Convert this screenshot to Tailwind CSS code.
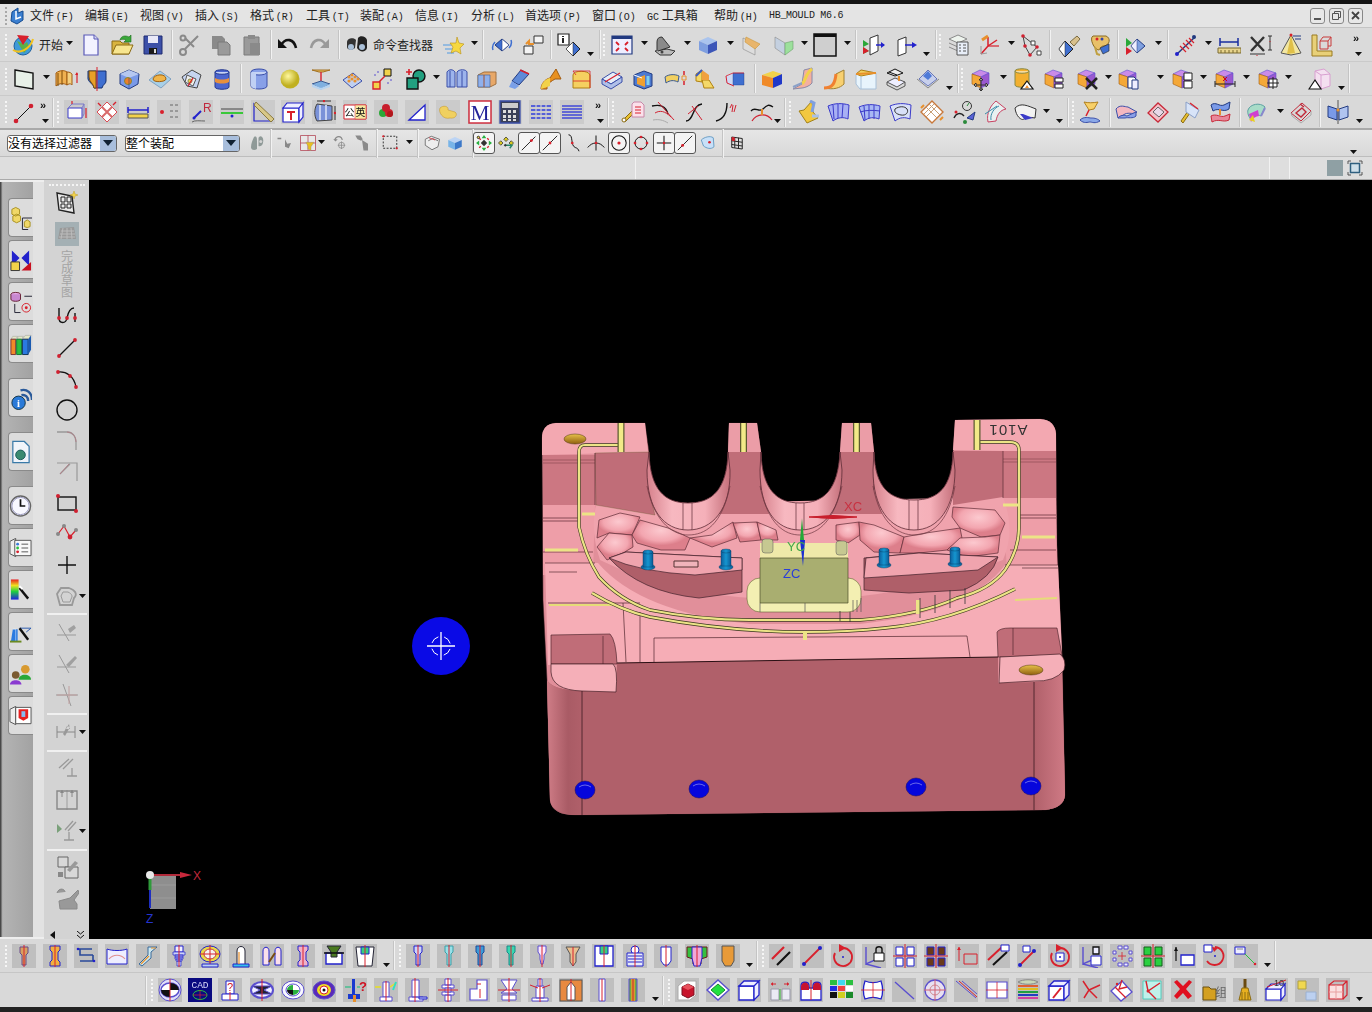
<!DOCTYPE html>
<html>
<head>
<title>NX HB_MOULD</title>
<script src="https://cdn.jsdelivr.net/npm/@tailwindcss/browser@4"></script>
</head>
<body class="w-[1372px] h-[1012px] overflow-hidden bg-[#222] font-['Liberation_Sans','Noto_Sans_CJK_SC',sans-serif] text-black">
<div class="h-1 bg-[#141414]"></div>

<!-- menu bar -->
<div class="flex items-center h-6 bg-[#e4e4e4] border-b border-[#c4c4c4] text-[12px] font-['Noto_Sans_CJK_SC',sans-serif] text-[#222]">
	<div class="ml-[5px] h-[18px] border-l-2 border-dotted border-[#a8a8a8]"></div>
	<svg class="ml-[2px] w-[16px] h-[18px] blur-[0.3px]" viewBox="0 0 16 18"><path d="M3 5l6-4v5l5-2v9l-6 4-6-3z" fill="#3b7fd0" stroke="#134a8f"/><path d="M7 4v8l5-2" fill="none" stroke="#fff" stroke-width="1.5"/></svg>
	<div class="ml-[5px] flex items-center">
		<span class="w-[55px]">文件 <span class="font-['Liberation_Mono'] text-[10px] -ml-[1px]">(F)</span></span>
		<span class="w-[55px]">编辑 <span class="font-['Liberation_Mono'] text-[10px] -ml-[1px]">(E)</span></span>
		<span class="w-[55px]">视图 <span class="font-['Liberation_Mono'] text-[10px] -ml-[1px]">(V)</span></span>
		<span class="w-[55px]">插入 <span class="font-['Liberation_Mono'] text-[10px] -ml-[1px]">(S)</span></span>
		<span class="w-[56px]">格式 <span class="font-['Liberation_Mono'] text-[10px] -ml-[1px]">(R)</span></span>
		<span class="w-[54px]">工具 <span class="font-['Liberation_Mono'] text-[10px] -ml-[1px]">(T)</span></span>
		<span class="w-[55px]">装配 <span class="font-['Liberation_Mono'] text-[10px] -ml-[1px]">(A)</span></span>
		<span class="w-[56px]">信息 <span class="font-['Liberation_Mono'] text-[10px] -ml-[1px]">(I)</span></span>
		<span class="w-[54px]">分析 <span class="font-['Liberation_Mono'] text-[10px] -ml-[1px]">(L)</span></span>
		<span class="w-[67px]">首选项 <span class="font-['Liberation_Mono'] text-[10px] -ml-[1px]">(P)</span></span>
		<span class="w-[55px]">窗口 <span class="font-['Liberation_Mono'] text-[10px] -ml-[1px]">(O)</span></span>
		<span class="w-[67px]"><span class="font-['Liberation_Mono'] text-[10px]">GC</span> 工具箱</span>
		<span class="w-[55px]">帮助 <span class="font-['Liberation_Mono'] text-[10px] -ml-[1px]">(H)</span></span>
		<span class="font-['Liberation_Mono'] text-[10px] tracking-[-0.3px] leading-[18px]">HB_MOULD M6.6</span>
	</div>
	<div class="ml-auto mr-[9px] flex gap-[4px]">
		<span class="w-[15px] h-[16px] rounded-[3px] border border-[#888] bg-[#e8e8e8] flex items-end justify-center pb-[3px]"><span class="w-[7px] h-[2px] bg-[#555]"></span></span>
		<span class="w-[15px] h-[16px] rounded-[3px] border border-[#888] bg-[#e8e8e8] flex items-center justify-center"><svg class="w-[9px] h-[9px]" viewBox="0 0 9 9"><path d="M2.500 2V.5h6v6H7M.5 2.500h6v6h-6z" fill="none" stroke="#555"/></svg></span>
		<span class="w-[15px] h-[16px] rounded-[3px] border border-[#888] bg-[#e8e8e8] flex items-center justify-center"><svg class="w-[9px] h-[9px]" viewBox="0 0 9 9"><path d="M1 1l7 7M8 1L1 8" stroke="#444" stroke-width="1.800"/></svg></span>
	</div>
</div>

<!-- toolbars -->
<div id="r1" class="flex items-center h-[34px] bg-[#dadada] border-b border-[#cacaca]"></div>
<div id="r2" class="flex items-center h-[34px] bg-[#d9d9d9] border-b border-[#cacaca]"></div>
<div id="r3" class="flex items-center h-[34px] bg-[#d9d9d9] border-b-2 border-[#a9a9a9]"></div>
<div id="r4" class="flex items-center h-[27px] bg-gradient-to-b from-[#e6e6e6] to-[#d9d9d9] border-b border-[#bdbdbd] text-[12px]"></div>
<div class="flex items-center h-[23px] bg-[#dedede] border-b border-[#aaa]">
	<div class="ml-[635px] w-px h-full bg-[#f2f2f2]"></div>
	<div class="ml-[633px] w-px h-full bg-[#f2f2f2]"></div>
	<div class="ml-[19px] w-px h-full bg-[#f2f2f2]"></div>
	<div class="ml-[37px] w-4 h-4 bg-[#8fa0a4]"></div>
	<svg class="ml-[4px] w-4 h-4" viewBox="0 0 16 16"><path d="M1 4V1h3M12 1h3v3M15 12v3h-3M4 15H1v-3" fill="none" stroke="#555"/><rect x="3.500" y="3.500" width="9" height="9" fill="#cfe0ea" stroke="#2f5f7f" stroke-width="1.500"/></svg>
</div>

<!-- middle: docks and graphics area -->
<div class="flex h-[759px]">
	<div class="w-[33px] border-y-2 border-[#eee] bg-gradient-to-r from-[#333] via-[#b4b4b4] via-[8%] to-[#a2a2a2]" >
		<div id="dock" class="pt-[15px] pl-[8px] flex flex-col"></div>
	</div>
	<div class="w-[11px] border-y-2 border-[#eee] bg-[#e2e2e2]"></div>
	<div id="tools" class="w-[45px] bg-[#d3d3d3] flex flex-col items-center"></div>

	<div class="relative flex-1 bg-black overflow-hidden">
		<!-- WCS handle -->
		<div class="absolute left-[323px] top-[437px] w-[58px] h-[58px] rounded-full bg-[#0a0ae6] flex items-center justify-center blur-[0.4px]">
			<svg class="w-[28px] h-[28px]" viewBox="0 0 28 28"><path d="M14 0v28M0 14h28" stroke="#fff" stroke-width="1.300"/><circle cx="14" cy="14" r="9.500" fill="none" stroke="#fff" stroke-dasharray="9 5.900" stroke-dashoffset="-3"/></svg>
		</div>

		<!-- absolute csys -->
		<svg class="absolute left-[50px] top-[680px] w-[120px] h-[70px]" viewBox="139 860 120 70">
			<rect x="150" y="876" width="26" height="33" fill="#8e8e8e"/>
			<path d="M150 885h26M150 898h26" stroke="#9c9c9c"/>
			<path d="M150 875h34" stroke="#b02a3a" stroke-width="2"/><path d="M180 872l12 3-12 3z" fill="#c8283c"/>
			<path d="M150 875v15" stroke="#2f9a3a" stroke-width="3"/><path d="M150 890v18" stroke="#1e2ec0" stroke-width="2"/>
			<circle cx="150" cy="875" r="4" fill="#e8e8e8"/>
			<text x="193" y="880" font-size="12" fill="#c0283c">X</text>
			<text x="146" y="923" font-size="12" fill="#2434d0">Z</text>
		</svg>

		<!-- mould part -->
		<svg class="absolute left-[441px] top-[230px] w-[640px] h-[415px] blur-[0.3px]" viewBox="530 410 640 415">
			<defs>
				<linearGradient id="u" x1="0" y1="0" x2="1" y2="0"><stop offset="0" stop-color="#d6808b"/><stop offset=".3" stop-color="#f7b8c0"/><stop offset=".7" stop-color="#f5b0b9"/><stop offset="1" stop-color="#c46f7a"/></linearGradient>
				<radialGradient id="c" cy=".35"><stop offset="0" stop-color="#fcc9cf"/><stop offset=".7" stop-color="#f3a6b0"/><stop offset="1" stop-color="#dd7f8b"/></radialGradient>
				<linearGradient id="w" x1="0" y1="0" x2="1" y2="0"><stop offset="0" stop-color="#cf7d87"/><stop offset=".6" stop-color="#a95b65"/><stop offset="1" stop-color="#b0606a"/></linearGradient>
				<linearGradient id="w2" x1="0" y1="0" x2="1" y2="0"><stop offset="0" stop-color="#b0606a"/><stop offset="1" stop-color="#cf7a85"/></linearGradient>
				<linearGradient id="g" x1="0" y1="0" x2="0" y2="1"><stop offset="0" stop-color="#e8c24a"/><stop offset="1" stop-color="#8f5f10"/></linearGradient>
				<linearGradient id="b" x1="0" y1="0" x2="1" y2="0"><stop offset="0" stop-color="#0d5f9c"/><stop offset=".5" stop-color="#1596d0"/><stop offset="1" stop-color="#0b5c97"/></linearGradient>
			</defs>
			<!-- silhouette with three U cut-outs -->
			<path d="M542 438Q542 424 556 423L645 423L649 452C650 490 665 503 688 503C712 503 727 490 728 452L729 423L757 423L761 452C762 490 777 503 800 503C824 503 838 490 840 452L842 423L871 423L874 452C875 488 890 500 914 500C938 500 952 488 953 452L955 420L1040 419Q1055 420 1056 434L1057 545L1062 650L1065 795Q1064 808 1045 810L575 815Q552 815 550 800L547 680L543 600Z" fill="#e18f9a" stroke="#3a1a20" stroke-width=".5"/>
			<!-- tab tops -->
			<path d="M542 438Q542 424 556 423L645 423L648 452L542 455Z" fill="#f3a8b1"/>
			<path d="M729 423h28l4 29h-33z" fill="#eb9da7"/><path d="M842 423h29l3 29h-34z" fill="#eb9da7"/>
			<path d="M955 420L1040 419Q1055 420 1056 434V452L953 450Z" fill="#f3a8b1"/>
			<!-- side shelves -->
			<path d="M543 455h52v50h-52z" fill="#cc7782"/><path d="M1003 451h53v47h-53z" fill="#cc7782"/>
			<path d="M543 460h52M543 463h52M1003 459h53M1003 462h53" stroke="#8d4a55" stroke-width=".7"/>
			<path d="M543 505h52l-2 70h-50z" fill="#ee9ea8"/><path d="M1003 498h53l1 75h-50z" fill="#ee9ea8"/>
			<path d="M543 518h36M543 521h36M543 552h50M1018 515h38M1018 518h38M1010 550h46" stroke="#6c3640" stroke-width=".8"/>
			<!-- cell field -->
			<path d="M596 505L1003 497Q1016 530 1003 560Q900 600 800 600Q680 600 600 560Q590 530 596 505Z" fill="#f0a3ad"/>
			<!-- tab faces -->
			<path d="M595 453L649 452L650 495L655 515L596 505Z" fill="#c06d78" stroke="#552" stroke-width=".3"/>
			<path d="M728 452h33v38l8 24h-50l9-24z" fill="#c06d78"/>
			<path d="M840 452h34v38l8 24h-50l8-24z" fill="#c06d78"/>
			<path d="M953 451h50v46l-50 8z" fill="#c06d78"/>
			<path d="M595 453v52M1003 451v47M728 452v38M761 452v38M840 452v38M874 452v38" stroke="#5a2b33" stroke-width=".7"/>
			<g fill="url(#c)" stroke="#5e2c36" stroke-width=".7">
				<path d="M599 520L620 513L640 517L632 535L609 533L597 538Z"/>
				<path d="M640 520L647 522L668 528L690 538L685 550L661 550L637 543L632 535Z"/>
				<path d="M609 533L632 535L633 547L623 553L607 560L597 547Z"/>
				<path d="M690 538L712 535L733 522L737 538L712 547Z"/>
				<path d="M733 523L757 522L761 540L740 542Z"/>
				<path d="M757 522L776 530L778 540L761 540Z"/>
				<path d="M836 525L859 522L860 535L848 543L836 540Z"/>
				<path d="M859 522L874 525L904 537L900 553L874 552L860 540Z"/>
				<path d="M904 537L926 533L960 528L962 538L947 550L919 553L900 553Z"/>
				<path d="M953 507L995 510L1005 523L1000 535L981 537L960 528L952 517Z"/>
				<path d="M960 538L985 537L1000 535L998 553L967 557L947 550Z"/>
			</g>
			<!-- U rims -->
			<g fill="url(#u)" stroke="#5e2c36" stroke-width=".8">
				<path d="M649 452C650 490 665 503 688 503C712 503 727 490 728 452L730 470C731 510 712 530 688 530C664 530 647 510 647 470Z"/>
				<path d="M761 452C762 490 777 503 800 503C824 503 838 490 840 452L842 470C842 510 824 530 800 530C776 530 760 510 760 470Z"/>
				<path d="M874 452C875 488 890 500 914 500C938 500 952 488 953 452L955 470C955 508 938 530 914 530C890 530 873 508 873 470Z"/>
			</g>
			<path d="M647 486C655 525 675 535 688 535C705 535 722 525 730 486M760 486C768 525 785 535 800 535C815 535 833 525 842 486M873 486C880 525 900 535 914 535C930 535 948 525 955 486" stroke="#6e3640" stroke-width=".7" fill="none"/>
			<path d="M683 503v27M692 503v27M796 503v27M804 503v27M909 500v30M918 500v30" stroke="#5e2c36" stroke-width=".7"/>
			<!-- lower plate -->
			<path d="M545 563H598Q640 612 750 624H860Q970 612 1005 565H1058L1062 655L998 657L617 663L548 665Z" fill="#f6adb6"/>
			<path d="M545 563h50M1005 565h53M549 572h28M1022 568h36" stroke="#3f1d24" stroke-width=".6"/>
			<path d="M654 638L967 636M654 638V662M967 636L970 657M640 612V662M623 603L626 662M548 603H640" stroke="#51262e" stroke-width=".7" fill="none"/>
			<path d="M549 605L613 605M1015 600L1057 598" stroke="#e6dc78" stroke-width="2"/>
			<!-- corner pockets -->
			<path d="M551 635L610 634Q616 640 617 664H551Z" fill="#c06d78" stroke="#401d24" stroke-width=".6"/>
			<path d="M603 636V664" stroke="#401d24" stroke-width=".6"/>
			<path d="M997 632Q1000 628 1010 628L1057 628L1062 655L998 657Z" fill="#c06d78" stroke="#401d24" stroke-width=".6"/>
			<path d="M1013 628V655" stroke="#401d24" stroke-width=".6"/>
			<!-- plates -->
			<path d="M609 558L626 552L742 558V592L699 598Q640 592 609 558Z" fill="#af5f69" stroke="#40202a" stroke-width=".7"/>
			<path d="M609 558L626 552L742 558V570L695 575Q640 572 609 558Z" fill="#f0a4ae" stroke="#40202a" stroke-width=".7"/>
			<path d="M674 561h24v6h-24z" fill="#f0b3ba" stroke="#533"/>
			<path d="M864 558L919 553L998 557Q992 578 964 590L909 593L864 590Z" fill="#af5f69" stroke="#40202a" stroke-width=".7"/>
			<path d="M866 558L919 553L998 557L978 570L909 575L864 578Z" fill="#f0a4ae" stroke="#40202a" stroke-width=".7"/>
			<!-- insert block -->
			<rect x="747" y="578" width="114" height="34" rx="13" fill="#f3efb2" stroke="#5f5f30" stroke-width=".6"/>
			<path d="M760 543H848V558H760Z" fill="#efe9a9"/><path d="M760 558H848V603H760Z" fill="#a9ae70" stroke="#4c4d2a" stroke-width=".7"/>
			<path d="M760 603V612M805 603V612M853 600V612M857 600V612M861 598V612" stroke="#555" stroke-width=".7"/>
			<rect x="762" y="539" width="11" height="14" rx="3" fill="#c6c891" stroke="#555" stroke-width=".5"/>
			<rect x="836" y="541" width="11" height="14" rx="3" fill="#c6c891" stroke="#555" stroke-width=".5"/>
			<!-- pins -->
			<g stroke="#083a5e" stroke-width=".4" fill="url(#b)">
				<ellipse cx="648" cy="567" rx="7" ry="3"/><rect x="643" y="552" width="10" height="15"/><ellipse cx="648" cy="552" rx="5" ry="2"/>
				<ellipse cx="726" cy="567" rx="7" ry="3"/><rect x="721" y="551" width="10" height="15"/><ellipse cx="726" cy="551" rx="5" ry="2"/>
				<ellipse cx="884" cy="565" rx="7" ry="3"/><rect x="879" y="550" width="10" height="15"/><ellipse cx="884" cy="550" rx="5" ry="2"/>
				<ellipse cx="955" cy="564" rx="7" ry="3"/><rect x="950" y="549" width="10" height="15"/><ellipse cx="955" cy="549" rx="5" ry="2"/>
			</g>
			<!-- cooling channels -->
			<g fill="none" stroke="#3d3a20" stroke-width="3.400">
				<path d="M621 445H585Q579 445 579 452V527Q585 555 599 577Q620 600 650 610Q700 620 750 620H860Q920 615 957 598Q990 590 1005 570Q1019 550 1019 527V450Q1019 442 1010 442H979"/>
				<path d="M592 593Q620 610 650 617Q730 632 805 632Q850 632 885 628Q950 622 1015 589"/>
			</g>
			<g fill="none" stroke="#ece486" stroke-width="2.200">
				<path d="M621 445H585Q579 445 579 452V527Q585 555 599 577Q620 600 650 610Q700 620 750 620H860Q920 615 957 598Q990 590 1005 570Q1019 550 1019 527V450Q1019 442 1010 442H979"/>
				<path d="M592 593Q620 610 650 617Q730 632 805 632Q850 632 885 628Q950 622 1015 589"/>
			</g>
			<path d="M621 423v29M743.500 423v29M856.500 423v29M977 420v30" stroke="#5c5a30" stroke-width="7"/>
			<path d="M621 423v29M743.500 423v29M856.500 423v29M977 420v30" stroke="#f2ea88" stroke-width="4.500"/>
			<path d="M582 514h13M1003 505h16M1022 537h33M578 550h-33" stroke="#ece486" stroke-width="3"/>
			<path d="M918 600v14M805 632v8" stroke="#ece486" stroke-width="4"/>
			<path d="M840 611v10M850 612v10M950 590v18M965 588v16M920 598v20M935 595v18" stroke="#333" stroke-width=".8"/>
			<!-- marks -->
			<text transform="rotate(180 1008 430)" x="1008" y="435" text-anchor="middle" font-size="15" letter-spacing="1" fill="#333" font-family="Liberation Sans">A101</text>
			<ellipse cx="575" cy="439" rx="11" ry="5" fill="url(#g)" stroke="#4c3410" stroke-width=".5"/>
			<!-- wall -->
			<path d="M617 663L998 657V683L1034 682Q1055 682 1062 668L1065 795Q1064 808 1045 810L575 815Q552 815 550 800L547 680Q552 690 582 691L616 692Z" fill="#b0606a"/>
			<path d="M547 680Q552 690 582 691V815Q552 815 550 800Z" fill="url(#w)"/>
			<path d="M1034 682Q1055 682 1062 668L1065 795Q1064 808 1045 810H1034Z" fill="url(#w2)"/>
			<path d="M582 691V815M1034 682V810" stroke="#3c1a22" stroke-width=".8"/>
			<path d="M551 664H613Q618 668 616 692L582 691Q552 690 551 672Z" fill="#f5afb8" stroke="#401d24" stroke-width=".7"/>
			<path d="M1000 657L1060 654Q1067 660 1064 670Q1055 682 1034 681L999 683Z" fill="#f5afb8" stroke="#401d24" stroke-width=".7"/>
			<path d="M617 663L998 657" stroke="#2a1014" stroke-width="1"/>
			<ellipse cx="1031" cy="670" rx="12" ry="5" fill="url(#g)" stroke="#4c3410" stroke-width=".5"/>
			<g fill="#0606dc" stroke="#1a0c60" stroke-width=".5">
				<ellipse cx="585" cy="790" rx="10" ry="9"/><ellipse cx="699" cy="789" rx="10" ry="9"/><ellipse cx="916" cy="787" rx="10" ry="9"/><ellipse cx="1031" cy="786" rx="10" ry="9"/>
			</g>
			<path d="M579 787q6-4 12 0M693 786q6-4 12 0M910 785q6-4 12 0M1025 783q6-4 12 0" stroke="#6a6ae8" fill="none"/>
			<!-- working csys -->
			<path d="M809 517q24-3 48 0q-24 3-48 0" fill="#c81e2c" stroke="#c81e2c"/>
			<path d="M802 518l2 22h-4z" fill="#24a838"/><path d="M800 540h5l-2 26z" fill="#1a2ed0"/>
			<text x="844" y="511" font-size="13" fill="#c83040" font-family="Liberation Sans">XC</text>
			<text x="787" y="551" font-size="13" fill="#45a84a" font-family="Liberation Sans">YC</text>
			<text x="783" y="578" font-size="13" fill="#2a3ed8" font-family="Liberation Sans">ZC</text>
		</svg>
	</div>
</div>

<div id="b1" class="flex items-center h-[34px] bg-[#d9d9d9] border-b border-[#c6c6c6]"></div>
<div id="b2" class="flex items-center h-[34px] bg-[#d9d9d9]"></div>

<script>
const P=(d,f='none',s='none',w=1)=>`<path d="${d}" fill="${f}" stroke="${s}" stroke-width="${w}"/>`;
const C=(x,y,r,f='none',s='none',w=1)=>`<circle cx="${x}" cy="${y}" r="${r}" fill="${f}" stroke="${s}" stroke-width="${w}"/>`;
const B='#2222cc',R='#d8202c',K='#111',Y='#f2d24a',O='#e8902c',G='#8a8a8a',V='#5a4fcf';
const cube=(a='#aac4ee',b='#7f9fe0',c='#3c56b8')=>P('M3 8l9-4 9 4-9 4z',a)+P('M3 8l9 4v9l-9-4z',b)+P('M21 8l-9 4v9l9-4z',c);
const pcube=(x='')=>P('M3 7l8-4 9 3-8 4z','#c98be8',V,.6)+P('M3 7l9 3v11l-9-4z','#f4a838','#a05a10',.6)+P('M20 6l-8 4v11l8-4z','#9a58d0',V,.6)+x;
const cl=(x=12)=>P(`M${x} 1v22`,'none',R);
const scr=(f='#fff',s=B)=>P('M8 2h8v6l-2 2v11h-4V10L8 8z',f,s)+cl();
const plug=(f='#fff',s=B)=>P('M7 3h10v14l-3 4h-4l-3-4z',f,s)+cl();
const I={
globe:C(12,13,9,'#3f9ad8','#1d5f9f')+P('M6 8l7 3 3-2 2 5-5 6-3-5z','#5cb048')+P('M6 2l12 1-6 9z','#d8202c')+P('M2 17c6 4 17 0 20-11','none','#f2c21e',2),
new:P('M5 2h10l4 4v16H5z','#f2f2ff','#5a5ab8',1.2)+P('M15 2v4h4','#d8d8f0','#5a5ab8'),
open:P('M2 8h8l2 2h7v11H2z','#d9b43e','#8a6a14')+P('M2 21l4-9h17l-4 9z','#f7e58e','#8a6a14')+P('M10 7c1-4 5-5 9-3l2-2v7h-7l2-2c-2-1-4-1-6 0z','#3aa83a','#1c6c1c',.6),
save:P('M3 3h18v18H3z','#3c50a8','#1e2b70')+P('M7 3h10v7H7z','#e8e8f8')+P('M8 15h8v6H8z','#1a1a1a')+P('M13 16h2v4h-2z','#ddd'),
cut:P('M7 16L20 3M7 5l9 9','none',G,2)+C(5,19,3,'none',G,2)+C(5,5,2.500,'none',G,2),
copy:P('M3 3h10l3 3v10H3z',G)+P('M9 9h9l3 3v10H9z','#9a9a9a','#7a7a7a'),
paste:P('M4 4h15v18H4z','#9a9a9a','#7a7a7a')+P('M8 2h7v4H8z',G)+P('M10 10h10v12H10z','#8a8a8a'),
undo:P('M5 12c5-8 13-6 15 3','none',K,2.600)+P('M2 6v9h9z',K),
redo:P('M19 12c-5-8-13-6-15 3','none','#999',2.600)+P('M22 6v9h-9z','#999'),
bino:P('M2 9c0-4 7-5 9-2l-1 8c-3 3-8 2-8-1z','#333')+P('M22 7c-1-4-7-5-9-2l-1 10c3 5 9 4 10 0z','#222')+C(6,14,3,'#aac0d8')+C(17,14,3,'#aac0d8'),
star:P('M2 12h10M4 16h8M6 20h7','none','#7fb0e0',1.500)+P('M16 4l2 6 5 1-4 4 1 6-5-3-5 2 2-6-3-4 6 0z','#f6d840','#b89018',.6),
vrot:P('M12 6l7 6-7 6-7-6z','#3f6fd0','#223a80')+P('M12 6v12l7-6z','#fff','#223a80',.6)+P('M3 17c-1-3 0-6 2-8M21 7c1 3 0 6-2 8','none','#3f6fd0',1.500),
swap:P('M13 3h9v7h-9zM3 13h9v8H3z','#f4f4f4','#333')+P('M13 11l-5 0v-3l-3 3','none',O,2),
info:P('M1 1h11v11H1z','#fff','#222',1.2)+P('M6 3v1M6 5v5','none','#222',2)+P('M16 9l7 7-7 7-7-7z','#3f6fd0','#222')+P('M16 9v14l-7-7z','#fff','#222',.5),
fit:P('M2 3h20v18H2z','#eef','#223a80',1.200)+P('M2 3h20v3H2z','#223a80')+P('M6 9l3 3M18 9l-3 3M6 18l3-3M18 18l-3-3','none',R,1.800),
hat:P('M2 18l12-2 8 2-4 4H7z','#bbb','#333')+P('M4 17V9q0-5 5-5l8 10-12 4','#8a8a8a','#333')+C(9,19,1.500,'#444'),
cube:cube(),
cut1:P('M4 5l12 6v11L4 16z','#ddd',G,.6)+P('M7 4l14 7-5 5-10-7z','#e8b56c','#c9973a',.6),
cut2:P('M4 4l10 6v12L4 15z','#c4d0e0',G,.6)+P('M14 10l8-2v8l-8 6z','#9ce09c','#6ca06c',.6),
sq:'<rect x="1" y="1" width="22" height="22" fill="#cfcfcf" stroke="#111" stroke-width="1.500"/><rect x="1" y="1" width="22" height="3" fill="#111"/>',
vin:P('M9 5l8-3v16l-8 4z','#fff','#333')+P('M2 7l6 4-6 3zM2 14l6 4-6 3z','#2aa838')+P('M2 14l6 4-6 3z',R)+P('M15 12h8','none',B,1.500)+P('M20 9l4 3-4 3z',B),
vout:P('M4 7l8-3v16l-8 3z','#fff','#333')+P('M11 12h9','none',B,1.500)+P('M18 9l5 3-5 3z',B),
layer:P('M3 6l9-4 9 4-9 4z','#eef4ee',G)+P('M3 10l9 4 9-4M3 14l9 4 9-4','none',G)+P('M11 9h11v13H11z','#e8eef8','#555')+P('M13 12h2M17 12h3M13 15h2M17 15h3M13 18h2M17 18h3','none','#555'),
csys:P('M10 13L19 7M10 13l-7 8M10 13V4','none',R,1.500)+P('M4 7l6-4','none',O,3)+P('M3 21l6-1M3 21V13','none','#999')+P('M10 13l11 0','none',R,1.200),
net:P('M4 3l14 11-7 8L6 13z','none','#444')+C(4,3,1.800,'#d02030')+C(18,14,1.800,'#d02030')+C(11,22,1.800,'#d02030')+C(6,13,1.800,'#d02030')+P('M12 8h4v4h-4zM18 18h4v4h-4z','#fff','#444'),
dia1:P('M8 8l8 8-8 8-6-8z','#3f6fd0','#222')+P('M8 8v16l-6-8z','#fff','#222',.5)+P('M13 9l7-6 3 3-6 7z','#d8c08c','#7a6a40'),
pal:P('M5 3h13c5 2 4 9-2 10-4 0-3 3-5 4-5 0-10-12-6-14z','#e8c068','#8a6a20')+C(9,6,1.500,R)+C(14,6,1.500,'#34a')+P('M12 15l9-4v7l-6 3z','#3f6fd0','#222',.6)+P('M7 14l2 7 3 1','none','#c0a040',2),
vb:P('M12 6l8 7-8 7-6-7z','#7fa0e0','#223a80')+P('M12 6v14l-6-7z','#eef','#223a80',.5)+P('M1 5l6 5-6 4z','#2aa838')+P('M1 14l6 4-6 4z',R),
hatch:P('M3 21L21 4','none','#223a80',1.500)+P('M6 13l6 6M9 10l6 6M12 7l6 6M15 5l5 5','none',R,1.200)+C(3,21,2,B)+C(20,4,2,'#223a80'),
ruler:P('M3 5v8M21 5v8M3 9h18','none','#1a2ea0',1.500)+P('M1 15h23v5H1z','#e8d48c','#7a6a30')+P('M4 17v3M8 17v3M12 17v3M16 17v3M20 17v3','none','#7a6a30'),
xdim:P('M3 4l13 14M16 4L3 18','none','#333',2.400)+P('M2 21h15M20 3h4M20 17h4M22 3v14','none','#333')+P('M22 8v1M9 22v1','none',R),
cone:P('M12 2L2 20l10 2 10-2z','#f2e6a0','#555')+P('M12 2L8 21l8-1z','#e0c048')+P('M14 3l8 0M16 6h6','none','#223a80')+C(12,2,1.500,R),
frame:P('M2 2h5v16h15v5H2z','#e8d078','#9a7a20')+P('M10 8h8v8h-8zM13 4h8v9h-3M10 8l3-4M18 8l3-4','none','#c83a3a'),
more:'<text x="2" y="9" font-size="11" font-weight="700" fill="#111" font-family="Liberation Sans">»</text>'+P('M4 19h7l-3.500 4z',K),

plane:P('M3 3l18 3v16L3 19z','#e8f0e8',K,1.400),
extr:P('M2 6c4-3 8-3 11-1v13c-3-2-8-2-11 1z','#f0b050','#a05a10')+P('M13 5c3 0 4 1 5 2v11c-1-1-2-2-5 0z','#f4d080','#a05a10')+P('M4 6v13M8 4v14','none','#7a4a08')+P('M23 16V6','none',R,1.200)+P('M21 8l2-3 1 3z',R),
rev:P('M3 4h18v10c0 3-3 3-4 7h-8c0-4-7-6-6-11z','#3f6fd0','#122f70')+P('M11 4v17h-2c0-4-5-6-5-11V4z','#e8a028','#7a5010')+P('M12 0v24','none',R),
hole:P('M3 7l9-4 10 4-1 10-9 5-9-5z','#7a9ae8','#223a80')+P('M3 7l9 4 10-4-10-4z','#b6c8f0')+C(11,14,3.500,'#f08028','#883')+P('M12 11v10','none','#223a80',.5),
boss:P('M12 4l11 8-10 9L1 13z','#a8d0e8','#7fa0c0')+P('M5 12c1-5 13-6 13 0 0 3-13 4-13 0z','#f0b448','#a06010'),
pock:P('M3 10l10-7 9 5-4 13L8 19z','#c6d4f0','#444')+P('M8 8l9 4-3 7-8-4z','#eee','#555')+C(11,14,2,Y,'#885')+P('M9 19l5-8','none',R,1.400),
drum:P('M5 5c0-3 14-3 14 0v15c0 3-14 3-14 0z','#4c66d0','#24388f')+P('M5 5c0 3 14 3 14 0','#c8d4f4','#24388f')+P('M5 11c4 2 10 2 14 0v4c-4 2-10 2-14 0z','#e8903c'),
cyl:P('M4 5c0-4 16-4 16 0v14c0 4-16 4-16 0z','#88a0e8','#3a4ea8')+P('M4 5c0 4 16 4 16 0','#c6d4f4','#3a4ea8')+P('M4 5v14c1 2 3 2 5 3V7z','#c0d0f4'),
ball:`<defs><radialGradient id="ba" cx=".4" cy=".35"><stop offset="0" stop-color="#fff8a0"/><stop offset="1" stop-color="#c0b020"/></radialGradient></defs>`+C(12,12,9.500,'url(#ba)'),
tee:P('M3 3h18l-7 2h-4z','#f0c060','#a07020')+P('M12 5v9','none',R,1.400)+P('M3 17l9-3 9 3-9 5z','#7fb0e0','#3a5a90')+P('M3 17v3l9 3 9-3v-3l-9 4z','#b8d4f0'),
dots:P('M3 13l10-7 9 8-10 7z','#c0d0f0','#3a4ea8')+C(9,10,1.600,O)+C(12,8,1.600,O)+C(15,10,1.600,O)+C(12,12,1.600,O)+C(9,14,1.600,O)+C(15,14,1.600,O)+C(18,12,1.600,O),
fea:P('M13 2h7v7h-7z',Y,K)+P('M2 15h7v7H2z',Y,R,1.400)+P('M8 15l6-6','none',R,1.500)+P('M3 8h2M6 5h2M19 13h2M16 16h2','none',V),
uni:P('M6 2v6M3 5h6','none',R,1.600)+C(16,9,6,'#22a080',K,1.400)+P('M4 11h11v11H4z','#22a080',K,1.400),
tub:P('M2 5c2-3 6-3 8 0v15H2zM12 5c2-3 9-3 10 0v15H12z','#9db4ec','#3a4ea8')+P('M5 4v16M17 4v16','none','#3a4ea8'),
box2:P('M2 8l6-3h12v12l-6 3H2z','#e8a868','#a07040')+P('M2 8h12v12H2z','#8fb0ec','#3a5a90',.6)+P('M8 8v12','none','#a05030'),
swe:P('M5 14l9-11 8 4-10 11z','#5f8ad8','#223a80')+P('M5 14l7 5-4 3-6-2z','#7aa0e8')+P('M13 3l9 4','none',R,1.500),
fil:P('M3 22c0-5 4-10 9-11l6-9 5 10-6 0c-7 4-8 6-8 10z','#e89020','#a05a10')+P('M3 22c0-5 4-10 9-11v8z',Y),
bx3:P('M4 8c0-5 16-5 17 0v13H4z','#f5d060','#b08010')+P('M4 4h17v17M4 4l3 4M21 4','none',R,.8)+P('M4 14h17','none',R,.8),
pln:P('M2 12l11-7 9 5-11 7z','#e8eef8','#3a4ea8')+P('M2 12v5l9 5 11-7v-5l-11 7z','#b0c0e8','#3a4ea8')+P('M5 15L20 6','none',R,1.200),
sbox:P('M3 8l10-4 8 3v12l-8 3-10-4z','#4c7ad0','#223a80')+P('M6 11l8-3v12l-8-3z','#f0a030')+P('M3 8l8 3','none','#fff')+P('M17 9v9','none','#7fd0f0',3),
rib:P('M2 10c4-3 10-3 14-1l-1 6c-4-2-8-2-12 1z','#f2d060','#3a5a90')+P('M21 4v4M21 14v4','none',R,1.500)+P('M19 9h4v4h-4z','none',O),
blnd:P('M9 3l-6 4v7l6 1zM9 13h7l5 8H11z','#f4d868','#b08010')+P('M9 3v10h7V8z','#f0a040')+P('M9 3L3 9','none','#3a5ac0',2),
hul:P('M3 9l7-3 11 0-1 12-10 1-7-3z','#cfdaf4','none')+P('M10 6h11v12H10z','#3f6fd0','#223a80',.4)+P('M3 9l1 7 7 3','none',R)+P('M3 9l7-3h11','none',R,.8),
cube2:P('M2 8l11-4 9 3-9 4z',Y)+P('M2 8l11 3v10L2 18z','#f08a28')+P('M22 7l-9 4v10l9-4z','#2038c8'),
curl:P('M2 22l9-5 2-14 8-2v15c-2 3-8 5-10 5z','#f3b0a0','#8a8aa8')+P('M11 17c4-3 3-10 10-15','none',Y,3)+P('M2 20l9-4','none','#8aa0c8',2),
curl2:P('M2 21c8 0 11-4 12-14l8-4v14c-4 4-10 6-20 4z','#f8d070','#a08030')+P('M2 21c8 0 11-4 12-14','none','#f08030',3),
tile2:P('M3 7l5-4 15 3v16H7l-4-5z','#e8f4fc','#a8c0d8')+P('M3 7l5-4 15 3-15 3z','#f0d060','#b08010')+P('M3 7l20-1','none',O,2)+P('M8 9v13','none','#a8c0d8'),
stack:P('M3 6l8-4 8 4-8 3z','#eee',K)+P('M5 5l8 3','none',K)+P('M3 15l8-4 10 4-8 5z','#eef','#555')+P('M3 15v3l10 5 8-4v-4','none','#555')+P('M15 9v5','none',O,2),
mir:P('M3 12l9-9 9 9-9 7z','#c8d0ec','#3a4ea8',.7)+P('M7 9l5-5 4 5-4 4z','#4f7ad8')+P('M1 12l11 9 11-9','none','#888',1),
pmv:pcube('<path d="M12 13v10M7 18h10M12 11l-2 2h4zM12 24l-2-2h4zM5 18l2-2v4zM19 18l-2-2v4z" fill="#fff" stroke="#333"/>'),
pcyl:P('M4 4c0-3 14-3 14 0v14c0 3-14 3-14 0z','#f3b030','#884')+P('M4 4c0 3 14 3 14 0','#f8dca0','#884')+P('M16 14l6 8H10z','#fff',K,1.200)+P('M16 18l-2 3h4z','#f09030'),
prep:pcube('<path d="M13 11h8v4h-8zM13 17h8v4h-8z" fill="#fff" stroke="#222"/>'),
pdel:pcube('<path d="M11 11l11 11M22 11L11 22" stroke="#222" stroke-width="2.500"/>'),
pcop:pcube('<path d="M12 10h6l2 2v9h-8z" fill="#fff" stroke="#223a80"/><path d="M16 13h6v9h-6z" fill="#eef" stroke="#223a80"/>'),
psp:pcube('<path d="M14 6h8v7h-8zM14 14h8v7h-8z" fill="#fff" stroke="#222"/>'),
pdim:pcube('<path d="M2 17h20M2 14v6M22 14v6" stroke="#222" fill="none"/><path d="M10 10l4 4M14 10l-4 4" stroke="#c02" fill="none"/>'),
pbox:pcube('<path d="M13 12h8v8h-8z" fill="#fff" stroke="#222"/><path d="M11 16h12M17 10v12" stroke="#222"/>'),
pfr:P('M7 4l9-2 6 5v12l-9 3-6-4z','#f4e0f0','#d8a0d0')+P('M7 4l6 4 9-1M13 8v14','none','#d8a0d0')+P('M7 13l6 9H1z','#fff',K,1.200),

line:P('M4 21L19 6','none',K)+C(4,21,2.300,'#d02030')+C(19,6,2.300,'#d02030'),
bt1:P('M4 8h14v10H4z','#fff','#3a3ac8')+P('M4 8l4-4h12v10l-2 4M18 8l2-4','none','#7a7ac8')+P('M8 4V1M22 8v10','none',R,1.200),
bt2:P('M12 2l10 10-10 10L2 12z','#fff',R,.8)+P('M7 7l10 10M17 7L7 17','none','#d86a6a',2)+P('M3 3l3 3M21 2l-3 3','none',R,1.400),
bt3:P('M2 7v6M22 7v6M2 10h20','none',B,1.500)+P('M2 14h20v4H2z',Y,'#555'),
bt4:C(5,12,2,'#d8202c')+P('M13 5h3M18 5h3M13 11h3M18 11h3M13 17h3M18 17h3','none','#666'),
bt5:P('M3 22c3-2 8-1 13-1','none','#666')+P('M5 18l7-7','none',B,2)+C(5,18,1.500,B)+'<text x="14" y="12" font-size="12" fill="#c0283c" font-family="Liberation Sans">R</text>',
bt6:P('M1 9h22','none','#444')+P('M1 13h22','none','#3ac83a',2)+C(12,16,1.500,B),
bt7:P('M3 4l17 17H3z','none',B,1.200)+P('M5 2l18 17-3 3L3 5z','#d8c888','#8a7a40'),
bt8:P('M2 8h16v14H2z','#fff',B,1.200)+P('M2 8l4-5h16l-4 5zM18 8l4-5v14l-4 5z','#eef',B,1.200)+P('M6 12h8M10 12v8','none',R,2),
bt9:P('M5 4l15 2v14L5 21c-3-5-3-12 0-17z','#7a92d8','#444')+P('M8 5v15M14 5v15','none','#c4d0f0',2)+P('M5 1h14M23 6v14','none','#333')+C(12,1,1.200,R)+C(23,13,1.200,R),
gy:P('M1 5h22v14H1z','#fff',R)+P('M12 5h11v14H12z','#f4e8a0',R,.5)+'<text x="1.500" y="16" font-size="10" fill="#111" font-family="Noto Sans CJK SC">公</text><text x="12.500" y="16" font-size="10" fill="#111" font-family="Noto Sans CJK SC">英</text>',
tri:C(9,13,4,'#2aa838')+C(15,13,4,'#d02030')+C(12,8,4,'#c81e2c')+C(16,14,3,'#b0181c'),
wed:P('M4 20L20 5v15z','#fff',B,1.300),
blob:P('M4 8c3-3 9-2 8 2l7 2c3 2 1 7-5 6-7 2-12-6-10-10z','#f0d060','#c09020',.5),
M:'<rect x="1" y="1" width="22" height="22" fill="#fff" stroke="#d03040" stroke-width="1.500"/><text x="12" y="19.500" text-anchor="middle" font-size="21" fill="#222299" font-family="Liberation Serif">M</text>',
calc:P('M2 1h20v22H2z','#3a4058','#3a4ea8',1.300)+P('M4 3h16v5H4z','#ccc')+P('M5 10h3v3H5zM10 10h3v3h-3zM15 10h3v3h-3zM5 15h3v3H5zM10 15h3v3h-3zM15 15h3v3h-3zM5 19h3v2H5zM10 19h3v2h-3zM15 19h3v2h-3z','#ddd'),
grid:P('M2 6h20M2 10h20M2 14h20M2 18h20','none','#5560d8',1.800)+P('M7 4v16M12 4v16M17 4v16','none','#d0d0d0',1.200),
lines:P('M2 6h20M2 9h20M2 12h20M2 15h20M2 18h20','none','#4048d8',1.400),
wrench:P('M2 20l10-10 2 2L4 22z','#e8c030','#8a6a10')+C(3,20,2,'#fff','#8a6a10')+P('M13 2h7l3 3v12H11V4z','#fbe0ea','#c888a8')+P('M14 7h6M14 10h6M14 13h6','none',R),
sk1:P('M1 6c8-2 14 0 16 8','none',K,1.300)+P('M4 13c5-3 10-2 16 4M7 2l16 18','none','#d02030')+P('M2 20c6-1 10 0 15 3','none','#aaa'),
sk2:P('M4 21c8 0 6-16 16-17','none',K,1.400)+P('M10 6l10 14M6 14l10-8','none','#d02030'),
sk3:P('M3 21c8-2 11-9 11-18','none',K,1.400)+P('M19 12l1-7M21 12l2-7','none','#d02030')+P('M17 8l2-4','none','#d02030'),
sk4:P('M1 11c4-5 8 2 12-2s6-5 10-2','none',K,1.300)+P('M2 21c5-8 15-8 20-1','none','#d02030',1.200)+P('M12 9v6','none',O,2),
sf1:P('M3 11l5-1 8-9 1 11 5 6-11 5z','#f2c840','#a08018')+P('M14 1l4 2-2 9','none','#7f9fe0',3)+P('M16 16h7','none','#a8c0e8',3),
sf2:P('M1 6c7-3 14-3 21-1l-1 14c-4-2-10-2-15 2z','#a8b0f4','#3a3ac8')+P('M6 5l1 14M11 4v14M16 4l-1 14','none','#3a3ac8'),
sf3:P('M1 7c7-3 14-3 21-1l-1 13c-5-2-10-2-15 2z','#a8b8f4','#3a3ac8')+P('M6 6l1 14M11 5v14M16 5v14M2 12c6-2 13-2 20-1','none','#3a3ac8'),
sf4:P('M1 6c7-3 14-3 21-1l-1 14c-5-2-10-2-15 2z','#d8e0f8','#3a3ac8')+P('M6 9c4-3 10-3 12 0s-1 7-6 6-7-3-6-6z','none','#333'),
sf5:P('M12 1l11 11-11 11L1 12z','#fff','#c8783a',1.400)+P('M6 7l11 11M9 4l11 11M17 6L6 17M14 4L4 14','none','#c8a078')+P('M1 8l3-3M20 20l3-3','none',O,2),
sf6:C(15,6,4.500,'none','#333')+P('M15 6l2-3','none','#2a8a3a')+P('M2 18c2-5 7-6 10-2','none','#222',1.400)+P('M15 18l8-6-2 8z','#5a62d8','#223a80')+C(4,12,1.500,R)+C(13,22,2,'#2a8a3a'),
sf7:P('M5 22c-2-9 3-17 8-21l10 8c-6 1-9 6-10 12z','#e8f0f0','#c84060')+P('M8 20c-1-6 3-12 8-14M2 14l12-8','none','#3a8aa8'),
sf8:P('M1 8c6-6 13-2 21 1l-1 9c-5-1-9-1-11 1s-8-2-9-11z','#f2f2f2','#333')+P('M6 14l5 6 8-2-10-4z','#3a3ac8'),
ss1:P('M6 2c4 1 9 1 14 0l-4 7-5 1z','#f8d068','#b08020')+P('M11 10l-3 6','none',R,1.500)+P('M2 20c4-4 9-2 11-2s6 0 9 3c-5 3-8 1-10 1s-6 2-10-2z','#8aa8e8','#3a4ea8'),
ss2:P('M1 9c4-5 9-2 12-2l9 5c-3 3-8 0-12 2L3 18z','#f4b8c0','#3a4ea8')+P('M3 18c2-3 6-3 9-2l9-4v4c-3 3-8 1-11 2z','#8aa0e8','#3a4ea8'),
ss3:P('M2 13l10-10 10 9-10 10z','#f4c0c8','#c82838',1.300)+P('M7 12l5-5 6 5-5 5z','#e8d8e8','#666'),
ss4:P('M4 21l7-10 2 2-7 10z','#e8c030','#8a6a10')+P('M9 2l13 8-4 8-9-6z','#d8e4f8','#8aa0c8')+P('M13 3l8 6','none',R,1.200),
ss5:P('M3 5c5-4 8 2 13 0l6-3-1 7c-6 4-10-2-16 2z','#7a9ae8','#223a80')+P('M3 16c5-3 10 2 14 0l5-2-1 6c-6 3-10-2-17 2z','#e8889a','#c82838')+P('M12 9v6','none',O,2),
rbw:P('M3 10c2-6 12-8 17-3l-4 9c-4-2-9-1-10 4-2-3-4-7-3-10z','#a8dcc8','#5aa0a0')+P('M4 14l9-4 1 6c-3 0-6 2-8 6z','#d040d0')+P('M4 20l4-5 2 7z','#e8d020')+P('M20 8l-4 8','none','#88c',2),
wnd:P('M2 13l11-10 9 8-10 10z','#d8d8d8','#c02838')+P('M7 13l6-5 4 4-5 5zM11 4l4 3','none','#c02838',1.400)+P('M2 13l1 3 9 7 10-8v-4','none','#aaa'),
mirr:P('M12 0v24','none','#555')+P('M2 6l9 3v11l-9-3z','#7a9ae8','#223a80')+P('M22 6l-9 3v11l9-3z','#b0c4f0','#223a80')+C(12,10,1.600,O),
cb10:P('M2 11h15v11H2z','#fff',B,1.200)+P('M2 11l5-5h14l-4 5zM17 11l4-5v11l-4 5z','#eef',B,1.200)+P('M3 9L22 2','none',R)+'<text x="10" y="8" font-size="9" fill="#333" font-family="Liberation Sans">10</text>',
cub2:P('M3 3h8v8H3z','#f0d850','#b0a040')+P('M11 14h10v8H11z','#bcd0f0','#9ab0d0'),
rbox:P('M3 7h14v14H3z','#fbe0e0',R,1.200)+P('M3 7l5-4h13v14l-4 4M17 7l4-4','none',R,1.200)+P('M3 14h14M10 7v14','none','#e8a0a0'),
};
// bottom row 1
Object.assign(I,{
a1:P('M8 3h8v6l-2 2v10h-4V11L8 9z','#d8a060','#6a4a88')+cl(),
a2:P('M7 2h10v4l-2 2v8l2 2v4H7v-4l2-2V8L7 6z','#f0b040',B)+cl(),
a3:P('M4 5h14M6 5v6h13M19 11v6H6M6 17h14','none','#2a4a9a',1.600)+C(4,5,1.300,B)+C(20,17,1.300,B),
a4:P('M2 5c5 2 15 2 20 0v15H2z','#eef',B)+P('M4 15c4-5 12-5 16 0','none','#e09090',1.200),
a5:P('M3 20l9-9V3h9l-6 5v6L6 22z','#cde8f0','#3a6a9a')+P('M5 20l8-8M15 4l5 0','none',O,1.200),
a6:P('M8 2h8v6H8z','#eef',B)+P('M6 8h12v3H6zM8 11h8v2H8zM8 13h8v2H8zM9 15h6v2H9zM10 17h4v5h-4z','#ccd4f8',B,.7)+cl(),
a7:`<ellipse cx="12" cy="10" rx="10" ry="8" fill="#e8d84a" stroke="${B}"/><ellipse cx="12" cy="10" rx="6" ry="5" fill="#f4f4f4" stroke="#c83a3a"/>`+P('M2 10h20M12 1v22','none',R)+P('M4 20h16v3H4z','#bcd0f0',B),
a8:P('M8 20V7c0-6 8-6 8 0v13','#fff','#223')+P('M4 20h16v3H4z','#36c0e8',B)+P('M10 8v12','none',O,1.200),
a9:P('M3 7c0-5 6-5 6 0v14H3zM15 7c0-5 6-5 6 0v14h-6z','#fbe0ea',B)+P('M9 18L15 9','none','#7a4a10',2),
a10:P('M7 2h10v4l-2 2v8l2 2v4H7v-4l2-2V8L7 6z','#f0b0c8',B)+cl(),
a11:P('M4 9h16v11H4z','#fff',B,1.400)+P('M5 2h14l-4 6v5H9V8z','#4a7a20','#223')+P('M2 9h20','none',K,1.500),
a12:P('M3 3h18l-2 19H5z','#fff','#223')+P('M8 3h8v7H8z','#36d080',B)+cl(),
c1:scr('#ccd4f8'),c2:scr('#98e0e8','#3aa0a8'),
c3:scr('#3a9ad8','#1a4a9a'),
c4:scr('#38d8b0','#1a8a8a'),
c5:P('M8 2h8v6l-2 3v4l-1 5h-2l-1-5v-4L8 8z','#fbe8fb',V)+cl(),
c6:P('M5 3h14l-4 7v8l-3 4-3-4v-8z','#e8c090','#555')+P('M12 3v19','none',R),
c7:P('M3 2h18v20H3z','#fff',B,1.300)+P('M8 2h8v8H8z','#36d080',B)+cl(),
c8:C(12,6,4,'#fff',B)+P('M4 9h16v13H4z','#e8ecfa',B)+P('M5 12h14M5 15h14M5 18h14','none',B)+cl(),
c9:plug(),
c10:P('M2 3h20v10l-6 2v5H8v-5l-6-2z','#36c040','#6a1a1a')+P('M7 3h10v11l-2 8H9l-2-8z','#f0a8d8',B)+cl(),
c11:P('M6 2h12v15l-3 5H9l-3-5z','#e89a38','#555'),
d1:P('M3 15L15 3','none',R,2.200)+P('M8 21L21 8','none',K,2.200),
d2:P('M4 20L20 4','none',R,1.800)+C(4,20,2,B)+C(20,4,2,B),
d3:P('M12 4a9 9 0 1 1-8 5','none',R,1.800)+P('M8 0l7 4-7 4z',R)+C(12,13,1,B),
d4:P('M4 3v17l16-7M4 20l15 4','none',V,1.400)+P('M12 9h10v8H12z','#fff',K)+P('M14 9V5c0-3 6-3 6 0v4','none',K,1.400),
d5:P('M3 3h7v8H3zM14 3h7v8h-7zM3 14h7v8H3zM14 14h7v8h-7z','#fff',B)+P('M0 12h24M12 0v24','none',R),
d6:P('M3 3h7v8H3zM14 3h7v8h-7zM3 14h7v8H3zM14 14h7v8h-7z','#6a3a1a',B)+P('M0 12h24M12 0v24','none',R),
d7:P('M4 3v14','none',R)+P('M2 6l2-3 2 3z',R)+P('M9 10h13v10H9z','none',R),
d8:P('M2 16L16 3','none',R,2)+P('M7 21L21 8','none',K,2)+P('M15 1h8v6h-8z','#fff',B),
d9:P('M3 21L17 7','none',R,1.800)+C(3,21,2,B)+C(17,7,2,B)+P('M6 2h7v6H6z','#fff',B),
d10:P('M12 4a9 9 0 1 1-8 5','none',R,1.800)+P('M8 0l7 4-7 4z',R)+P('M8 9h8v8H8z','#fff',B)+C(12,13,1,B),
d11:P('M4 3v17l16-7M4 20l15 4','none',V,1.400)+P('M12 12h10v9H12z','#fff',B)+P('M14 3h6v7h-6z','#eef',K,1.300),
d12:P('M8 2h4v3H8zM14 2h4v3h-4zM3 7h3v3H3zM19 7h3v3h-3zM3 14h3v3H3zM19 14h3v3h-3zM8 19h4v3H8zM14 19h4v3h-4z','#eef',V)+P('M8 12h8M12 8v8','none',R,.8),
d13:P('M3 3h7v8H3zM14 3h7v8h-7zM3 14h7v8H3zM14 14h7v8h-7z','#2ad040','#12601a')+P('M0 12h24M12 0v24','none',R),
d14:P('M4 3v14','none',K,1.200)+P('M2 7l2-4 2 4z',K)+P('M9 11h13v10H9z','#fff',B,1.300),
d15:P('M12 3a9 9 0 1 1-8 14','none',R,1.800)+P('M1 1h8v7H1z','#fff',B)+P('M9 3l6 1-4 4z',R)+C(12,12,1,B),
d16:P('M1 3h10v7H1z','#eef',B)+P('M3 5h6','none','#8a8a8a')+P('M11 10l10 10','none','#2ac040')+C(21,20,1.300,R),
e1:C(12,12,11,'#e0e0f8',V)+`<ellipse cx="12" cy="12" rx="9" ry="7" fill="#fff" stroke="${V}" stroke-width="1.500"/>`+P('M12 5a9 7 0 0 1 9 7h-9zM12 19a9 7 0 0 1-9-7h9z',K)+P('M12 1v22','none',R),
e3:P('M8 3h8v13H8z','#fff',B)+P('M4 16h16v6H4z','#fff',B)+'<text x="9" y="13" font-size="11" fill="#d01020" font-family="Liberation Sans">?</text>'+P('M12 14v8','none',R),
e4:`<ellipse cx="12" cy="12" rx="11" ry="8" fill="#f0f0ff" stroke="${V}" stroke-width="2"/>`+P('M2 8h20l-8 4 8 4H2l8-4z','#223',V)+P('M12 1v22','none',R),
e5:`<ellipse cx="12" cy="12" rx="11" ry="9" fill="#f8f8ff" stroke="${V}"/><ellipse cx="12" cy="12" rx="7" ry="6" fill="#fff" stroke="${V}"/>`+P('M6 12a6 5 0 0 1 6-5v5zM18 12a6 5 0 0 1-6 5v-5z','#2ab040')+P('M6 12a6 5 0 0 0 6 5v-5z',K),
e6:`<ellipse cx="12" cy="12" rx="11" ry="9" fill="#5a2ab8" stroke="${V}"/><ellipse cx="12" cy="12" rx="7" ry="6" fill="#f0e020"/>`+C(12,12,4,'#fff',R)+C(12,12,1.500,K),
e7:P('M9 1h3v15h5v5H5v-5h4z','#1a3ad0')+P('M10 17h3v7h-3z',O)+P('M2 9h6M14 9h3','none','#4ac090',1.500)+'<text x="16" y="13" font-size="13" font-weight="700" fill="#d01020" font-family="Liberation Sans">?</text>',
e8:P('M9 4h6v15H9z','#fff',V)+P('M6 19h12v4H6z','#fff',V)+P('M12 3v20','none',R)+P('M1 9h6M16 9l6-4','none','#e8e020',1.500)+P('M19 12l3-8','none','#30e0c0',2),
e9:P('M7 2h7v17H7zM4 19h14v4H4z','#fff',V)+P('M14 19h8v2h-8z','#ccd4f8',B)+P('M10 0v24','none',R),
e10:P('M9 1h6v6H9zM6 7h12v3H6zM6 14h12v3H6zM9 17h6v6H9z','#fff',V)+P('M9 10h6v4H9z','#ccd4f8',V)+P('M12 0v24M2 12h20','none',R),
e11:P('M15 2h6v20H4V11h7V2z','#fff',V,1.200)+P('M11 6h4M14 11v9','none',R),
e12:P('M4 2h16l-5 9 5 4H4l6-4zM5 17h14v5H5z','#fff',V)+P('M12 0v24M1 12h22','none',R),
e13:P('M8 8h8v12H8zM4 20h16v3H4z','#fff',V)+P('M10 1h4v7h-4z','#fff',V)+P('M12 0v24','none',R)+P('M2 7l8 3M14 10l8-3','none',R),
e14:'<rect x="1" y="2" width="22" height="21" fill="#e88a40" stroke="#555"/>'+P('M8 22V9l4-5 4 5v13z','#fff','#555')+cl(),
e15:P('M9 1h6v22H9z','#fff',V)+cl(),
e16:P('M8 1h8v22H8z','#6aa84a',V)+P('M10 1h4v22h-4z','#d0a030')+cl(),
f1:P('M3 8l6-5h12v14l-6 5H3z','#fff','#aaa')+P('M7 9l6-3 6 3v8l-6 3-6-3z','#c8142c','#7a1020')+P('M7 9l6 3 6-3-6-3z','#e8505c'),
f2:P('M12 2l11 10-11 10L1 12z','#fff',V,1.500)+P('M12 6l7 6-7 6-7-6z','#22e040','#1a8a2a'),
f3:P('M2 8h15v14H2z','#fff',B,1.300)+P('M2 8l5-5h15l-5 5zM17 8l5-5v14l-5 5z','#eef',B,1.300),
f4:P('M3 11h8v11H3zM14 11h8v11h-8z','#eaeaf4','#99a')+P('M12 11v11','none','#3ac03a')+P('M3 6h5M21 6h-5','none',R)+P('M3 6l2-2v4zM21 6l-2-2v4z',R),
f5:P('M2 8c0-5 8-5 8 0v2h4V8c0-5 8-5 8 0v14H2z','#fff',B,1.300)+P('M2 9c0-6 8-6 8 0v3H2zM14 9c0-6 8-6 8 0v3h-8z','#c81430')+P('M12 2v20','none',R),
f6:'<path d="M0 2h7v5H0zM16 2h7v5h-7z" fill="#2ac040"/><path d="M8 2h7v5H8z" fill="#40d8f0"/><path d="M0 8h7v5H0z" fill="#2030e0"/><path d="M8 8h7v5H8z" fill="#f04040"/><path d="M16 8h7v5h-7z" fill="#fff"/><path d="M0 14h7v6H0z" fill="#111"/><path d="M8 14h7v6H8z" fill="#d0d020"/><path d="M16 14h7v6h-7z" fill="#1a8a2a"/>',
f7:P('M4 3c5 2 11 2 16 0 2 6 2 13 0 18-5-2-11-2-16 0-2-5-2-12 0-18z','#fff',B,1.300)+P('M0 12h24M12 4v16','none',R,.8),
f8:P('M3 4l19 17','none',V,1.400),
f9:C(12,12,10,'#e8e0f0',V,1.300)+C(12,12,5,'none','#d08a90')+P('M12 1v22M1 12h22','none','#d06070'),
f10:P('M2 3l20 17M8 3l15 13','none',V)+P('M5 3l18 16','none',R),
f11:P('M2 4h20v16H2z','#fff',V,1.200)+P('M1 12h22M12 4v16','none',R,.8),
f12:P('M2 4c5-3 15-3 20 0-5 3-15 3-20 0z','#c8d8b8','#888')+P('M2 8h20','none','#e06030',2)+P('M2 11h20','none','#e0c020',2)+P('M2 14h20','none','#20a040',2)+P('M2 17h20','none','#2040c0',2)+P('M2 20h20','none','#d040a0',2),
f13:P('M2 8h15v14H2z','#fff',B,1.300)+P('M2 8l5-5h15l-5 5zM17 8l5-5v14l-5 5z','#eef',B,1.300)+P('M6 20L14 10','none',R,2),
f14:P('M5 3l6 9-5 8M11 12l11-5M11 12l8 8','none',R,1.500),
f15:P('M2 13L13 3l10 11-11 9z','#fff',V,1.300)+P('M6 9l11 11M13 2l-3 9 8-2','none',R,1.300)+C(8,6,1.200,R),
f16:P('M3 3h18v18H3z','#c0f0ea','#50d0c0')+P('M6 3l2 10 12-8M8 13l8 8','none',R,1.400)+C(8,13,1.500,R),
f17:P('M3 4l3-2 6 6 6-6 3 2-6 7 6 7-4 3-5-6-6 6-3-3 6-7z','#e01020'),
f18:'<path d="M1 9h6l2 2h5v11H1z" fill="#d4a020" stroke="#6a5010"/><text x="13" y="19" font-size="12" fill="#666" font-family="Noto Sans CJK SC">组</text>',
f19:P('M12 1v9','none','#6a4a10',3)+P('M6 22l3-12h6l3 12z','#e8b020','#8a6a10')+P('M9 14v8M12 14v8M15 14v8','none','#8a6a10'),
cad:'<rect width="24" height="24" fill="#0a0a80"/><text x="12" y="10" text-anchor="middle" font-size="9.500" fill="#d8d8f8" font-family="Liberation Mono">CAD</text><ellipse cx="12" cy="17" rx="7" ry="4.500" fill="none" stroke="#2ac040"/><path d="M5 17h14M12 12v10" stroke="#d82030" stroke-width=".7"/>',
// row 4
f0:P('M8 4c4-2 4 2 4 6v10c-3 2-7 2-8-2 0-5 2-10 4-14zM16 3c4 0 5 4 4 9-1 4-4 5-6 4V5z','#8f9a98')+C(17,10,2,'#d3d3d3'),
ar:P('M2 5h5v2H2zM12 7l3 6 5-1-3 7-5-2z','#888'),
flt:P('M2 2h20v20H2z','#e8e8e8','#b04050')+P('M12 2v20M2 12h20','none','#b04050')+P('M9 11h11l-4 6v5l-4-2v-4z','#e8c020','#888',.5),
rot:P('M5 8c2-6 9-6 10 0','none','#888',1.500)+P('M3 7l3 3 3-3z','#888')+C(14,15,4,'none','#888')+P('M14 10v10M9 15h10','none','#888'),
bro:P('M3 2h7l3 5-2 2-5-2zM12 8l8 5v9h-6z','#8a8a8a'),
sel:'<rect x="3" y="3" width="18" height="16" fill="none" stroke="#222" stroke-width="1.200" stroke-dasharray="2.500 2"/>'+C(3,3,1.500,R)+C(21,19,1.500,R),
sl1:P('M3 7l8-4 11 4-2 10-8 4-9-6z','#eee','#555')+P('M7 9l6-3 7 3','none','#555')+P('M8 5l8 3','none',R),
sl2:cube('#bcd4f4','#78b4e8','#3c78c8'),
s1:P('M12 2l3 4h-6zM12 22l3-4H9zM2 12l4-3v6zM22 12l-4-3v6z','#2ab040')+P('M12 8l4 4-4 4-4-4z','#333')+P('M6 6l2 2M16 6l2 2M6 18l2-2M16 18l2-2','none',R,1.600)+C(5,5,1.500,Y,K),
s2:P('M12 4l3 3-3 3-3-3zM5 9l3 3-3 3-3-3zM19 9l3 3-3 3-3-3z','#d8c820','#333')+P('M12 15h8l-3 4','none','#2a8a6a',2)+P('M11 13l2 2-2 2-2-2z','#333'),
s3:P('M3 21L20 4','none',K,1.100)+C(15,9,1.800,R),
s4:P('M3 21L21 3','none',K,1.100)+C(12,12,1.800,R),
s5:P('M6 1c7 0 2 14 9 17 3 1 4 2 5 5','none',K,1.300)+C(11,12,1.800,R),
s6:P('M1 18c6-8 16-8 22 0M12 2v20','none',K,1.300)+C(12,12,1.800,R),
s7:C(12,12,9,'none',K,1.300)+C(12,12,2,R),
s8:C(12,12,8,'none',K,1.300)+C(12,4,1.800,R)+C(12,20,1.800,R)+C(4,12,1.800,R)+C(20,12,1.800,R),
s9:P('M12 3v18M3 12h18','none',K,1.300)+C(12,12,1.500,R),
s10:P('M3 21L21 3','none',K,1.100)+C(9,15,1.800,R),
s11:P('M3 8c4-4 12-6 16-3l1 12c-4 4-10 2-14-1z','#c8e0f8','#4a8ab8')+C(14,11,1.800,R),
s12:P('M5 4l14 2v14l-14-2zM9 4.500v14M14 5v14M5 9l14 2M5 14l14 2','none','#222',1.300)+P('M5 4l4 .500v5L5 9z',R),
});
// left dock
Object.assign(I,{
k1:P('M3 3l4-2 4 2v5l-4 2-4-2zM4 10l4-2 4 2v5l-4 2-4-2z','#f0d868','#a89020')+P('M14 12h10M14 12v12M14 24h6','none','#223',1)+P('M16 16l3-2 3 2v5l-3 1-3-1z','#f0d868','#a89020'),
k2:P('M3 2l8 8-8 8zM21 2l-8 8 8 8z','#2222cc')+P('M2 14h9v9H2z',Y,'#333')+P('M13 23l10-9v9z','#c81020'),
k3:'<ellipse cx="7" cy="4" rx="5" ry="2" fill="#e8a8e8" stroke="#623"/>'+P('M2 4v5c0 3 10 3 10 0V4','#c888d0','#623')+P('M6 14v9h6M16 6h8','none','#223')+C(18,18,4.500,'none',R)+C(18,18,1.500,R),
k4:P('M2 7l2-3h5l-2 3zM8 7l2-3h5l-2 3zM14 7l3-4h6l-3 4z','#e4e8c8','#888',.4)+P('M2 7h5v16H2z','#f08a28','#733')+P('M8 7h5v16H8z','#2ac040','#173')+P('M14 7h6v16h-6z','#2a7ae0','#135')+P('M20 7l3-4v15l-3 5z','#1a5ab0'),
k5:P('M12 4c7-2 12 3 12 10M13 9c4-1 7 2 7 6','none','#2a5a9a',2.500)+C(10,17,7,'#2a7ad8','#134')+'<text x="10" y="21" text-anchor="middle" font-size="11" font-weight="700" fill="#fff" font-family="Liberation Serif">i</text>',
k6:P('M4 1h12l5 5v17H4z','#f0f4fa','#3a7aa8',1.300)+C(12,15,5,'#3a8a70','#1a5a5a'),
k7:C(12,12,10.500,'#eef','#666',1.500)+C(12,12,9,'#f8f8ff','#99b')+P('M12 5v7h5','none',K,1.800),
k8:P('M1 5l6-3v19l-6-3z','#eee','#555')+P('M6 4h17v16H6z','#f8f8f8','#555')+C(9,8,1.500,'#3a7ad8')+C(9,12,1.500,'#2ac040')+C(9,16,1.500,R)+P('M13 8h7M13 12h7M13 16h7','none','#555'),
k9:`<defs><linearGradient id="rb" x1="0" y1="0" x2="0" y2="1"><stop offset="0" stop-color="#e82020"/><stop offset=".3" stop-color="#f0e020"/><stop offset=".6" stop-color="#20d040"/><stop offset="1" stop-color="#2020e0"/></linearGradient></defs><rect x="2" y="1" width="8" height="21" fill="url(#rb)"/>`+P('M11 10l9 11','none',K,2.500)+P('M11 8l3 3','none','#fff',2),
k10:P('M2 22l2-13h5v13z','#2a7ae0')+P('M4 9h3v13H4','none','#fff',.5)+P('M11 8h12l-5 4','none','#2a5ab0')+P('M11 8l9 12','none',K,2.500)+P('M1 22h12','none','#6a8a20',2),
k11:C(7,13,4,'#7a5a30')+P('M1 23c0-6 12-6 12 0z','#8a3ad0')+C(17,7,4.500,'#d89a30')+P('M10 18c0-7 13-7 13 0z','#2aa838'),
k12:P('M1 5l6-3v19l-6-3z','#eee','#555')+P('M7 3h16v17H7z','#fff','#555')+P('M10 5h10v9l-5 3-5-3z','#e82020')+P('M13 7h4v6h-4z','#88bbf0'),
// sketch tools
t0:P('M2 3l15 3 2 17-15-3z','#e8e8e8','#222',1.400)+P('M6 7h4v5H6zM12 7h4v5h-4zM6 14h4v4H6zM12 14h4v4h-4z','none','#222')+P('M19 1l1 3 3 1-3 1-1 3-1-3-3-1 3-1z',Y,'#c0a020',.5),
gt:'<rect width="24" height="24" fill="#a4b0b4"/>'+P('M5 6l14-1 2 12H3z','#999')+P('M6 9h13M5 12h15M4 15h16M8 6l-2 11M12 6v11M16 6l1 11','none','#bbb'),
ts:P('M4 3V13c0 6 7 6 8 0 1-5 3-10 7-10M20 8v9','none',K,1.400)+C(4,13,1.900,'#d02030')+C(12,13,1.900,'#d02030')+C(20,13,1.900,'#d02030'),
tl:P('M4 20L20 4','none',K,1.300)+C(4,20,1.900,'#d02030')+C(20,4,1.900,'#d02030'),
ta:P('M3 5c8-1 16 4 18 15','none',K,1.300)+C(3,5,1.900,'#d02030')+C(15,9,1.900,'#d02030')+C(21,20,1.900,'#d02030'),
tc:C(12,12,10,'none',K,1.400),
tf:P('M2 3h10c6 0 9 5 9 10v8','none','#999',1.300)+P('M12 3c6 0 9 5 9 10','none','#b08088',1),
tg:P('M2 3h12l8 0v18M5 14l10-10','none','#999',1.200)+P('M5 14l9-10','none','#b08088'),
tr:'<rect x="3" y="6" width="18" height="13" fill="none" stroke="#111" stroke-width="1.400"/>'+C(3,5,2,'#d02030')+C(21,20,2,'#d02030'),
tp:P('M3 12L9 4l6 11 6-7','none',R,1.200)+C(3,12,2,'#888')+C(9,4,2,'#888')+C(15,15,2.400,'#d02030')+C(21,8,2,'#888'),
tx:P('M12 3v18M3 12h18','none',K,1.400),
tq:P('M6 4h8c6 2 9 6 5 10l-2 7H5L2 10z','none','#999',1.800)+P('M8 8h5c4 2 5 4 3 7l-1 3H8l-2-6z','none','#999'),
tn1:P('M4 4l10 17M2 15h19','none','#999')+P('M13 9l6-4 2 3-6 5z','#a0a0a0'),
tn2:P('M4 3l10 18M2 15h19','none','#999')+P('M11 13l9-9 2 2-8 9z','#a0a0a0'),
tn3:P('M8 1l8 22M1 12h22','none','#999')+P('M14 3v18M2 12h20','none','#c0a0a0'),
td:P('M2 6v12M20 6v12M2 12h18','none','#888')+P('M8 14l4-8 3 1-5 9zM14 4l-3 5 4 0z','#999'),
tm1:P('M4 12L14 3M8 13l10-10M12 20h10M17 12v8','none','#999',1.300),
tm2:P('M2 3h20v18H2z','none','#888',1.400)+P('M12 2v20','none','#888',.7)+P('M7 2v7M17 2v7','none','#888')+P('M5 5l2-3 2 3zM15 5l2-3 2 3z','#888'),
tm3:P('M10 11L18 2M13 12l8-9M9 21h10M14 13v8','none','#999',1.300)+P('M2 5v9l5-4z','#7aa07a'),
tb1:P('M3 1h10v10H3z','#d8d8d8','#666')+P('M10 11h13v11H10z','#d8d8d8','#666')+P('M3 16h5v5H3z','#888')+P('M12 14l8-9 3 2-8 9z','#999'),
tb2:P('M2 6c2-6 8-4 8-1M4 14l11-3 8-8 1 3-5 7 3 4v5H5z','#999','#888'),
});
const cr=()=>'<svg class="w-[7px] h-[4px]" viewBox="0 0 7 4"><path d="M0 0h7L3.500 4z" fill="#111"/></svg>';
const svg=(n,extra='')=>`<svg class="w-6 h-6 blur-[0.35px] ${extra}" viewBox="0 0 24 24">${I[n]||''}</svg>`;

// lay a toolbar out from the icon centres read off the reference
function row(id,spec,iconCls='',tileCls='bg-[#bfbfbf]'){
	let cur=0,html='';
	spec.trim().split(/\s+/).forEach(tok=>{
		let [x,name]=tok.split(':');x=+x;
		const w=name=='c'||name=='d'?7:name=='s'?2:name=='g'?2:name[0]=='t'&&name[1]=='='?(name.length-2)*12:name=='more'?16:24;
		const ml=x-w/2-cur;cur=x+w/2;
		const st=`style="margin-left:${ml}px"`;
		if(name=='c')html+=`<span class="flex shrink-0 h-[7px]" ${st}>${cr()}</span>`;
		else if(name=='d')html+=`<span class="flex shrink-0 translate-y-[9px]" ${st}>${cr()}</span>`;
		else if(name=='s')html+=`<span class="shrink-0 w-[2px] h-[29px] border-l border-[#c4c4c4] bg-[#f2f2f2]" ${st}></span>`;
		else if(name=='g')html+=`<span class="shrink-0 w-[2px] h-[22px] border-l-2 border-dotted border-[#f6f6f6]" ${st}></span>`;
		else if(name.startsWith('t='))html+=`<span class="shrink-0 text-[12px] font-['Noto_Sans_CJK_SC',sans-serif] text-[#222] whitespace-nowrap" ${st}>${name.slice(2)}</span>`;
		else if(name[0]=='*')html+=`<span class="shrink-0 w-6 h-6 ${tileCls}" ${st}>${svg(name.slice(1))}</span>`;
		else if(name[0]=='#')html+=`<span class="shrink-0 w-[22px] h-[22px] mx-px flex items-center justify-center rounded-[3px] border border-[#555] bg-[#f4f4f4] overflow-hidden" ${st}>${svg(name.slice(1),'scale-[0.8] shrink-0')}</span>`;
		else if(name=='more')html+=`<span class="shrink-0 w-4 h-6" ${st}>${svg('more')}</span>`;
		else html+=`<span class="shrink-0 w-6 h-6" ${st}>${svg(name,iconCls)}</span>`;
	});
	document.getElementById(id).innerHTML=html;
}

row('r1',`6:g 23:globe 51:t=开始 69:c 91:new 122:open 153:save 172:s 190:cut 221:copy 252:paste 271:s 288:undo 319:redo 339:s 357:bino 403:t=命令查找器 453:star 474:c 483:s 502:vrot 533:swap 551:s 569:info 590:d 600:s 604:g 622:fit 644:c 665:hat 687:c 708:cube 730:c 751:cut1 783:cut2 804:c 825:sq 847:c 856:s 873:vin 906:vout 926:d 936:s 940:g 958:layer 990:csys 1011:c 1031:net 1050:s 1069:dia1 1100:pal 1118:s 1137:vb 1158:c 1168:s 1186:hatch 1208:c 1229:ruler 1260:xdim 1291:cone 1322:frame 1359:more`);
row('r2',`6:g 24:plane 46:c 66:extr 97:rev 129:hole 160:boss 191:pock 222:drum 241:s 259:cyl 290:ball 321:tee 352:dots 383:fea 415:uni 436:c 457:tub 488:box2 519:swe 550:fil 581:bx3 612:pln 643:sbox 675:rib 705:blnd 735:hul 755:s 772:cube2 803:curl 834:curl2 865:tile2 896:stack 928:mir 949:d 958:s 962:g 981:pmv 1003:c 1023:pcyl 1054:prep 1087:pdel 1108:c 1128:pcop 1160:c 1182:psp 1203:c 1225:pdim 1246:c 1268:pbox 1288:c 1320:pfr 1341:d 1349:s`);
row('r3',`6:g 24:line 46:more 53:s 58:g 76:*bt1 107:*bt2 138:*bt3 169:*bt4 201:*bt5 232:*bt6 263:*bt7 293:*bt8 324:*bt9 355:*gy 386:*tri 417:*wed 448:*blob 480:*M 510:*calc 541:*grid 572:*lines 601:more 608:s 613:g 633:wrench 663:sk1 694:sk2 725:sk3 762:sk4 777:d 785:s 790:g 808:sf1 839:sf2 870:sf3 901:sf4 932:sf5 964:sf6 995:sf7 1026:sf8 1046:c 1059:d 1068:s 1073:g 1090:ss1 1110:s 1127:ss2 1158:ss3 1189:ss4 1220:ss5 1240:s 1257:rbw 1280:c 1301:wnd 1320:s 1338:mirr 1359:d`,'','bg-[#cbcbcb]');

// row 4 has the two combo boxes ahead of the icons
row('r4',`257:f0 271:s 285:ar 308:flt 321:c 340:rot 362:bro 377:s 390:sel 409:c 418:s 432:sl1 455:sl2 473:s 485:#s1 507:s2 531:#s3 553:#s4 576:s5 599:s6 623:#s7 645:s8 669:#s9 691:#s10 714:s11 729:s 743:s12 1359:d`,'scale-[0.75]');
document.getElementById('r4').insertAdjacentHTML('afterbegin',`
	<div class="absolute left-[7px] flex items-center w-[110px] h-[17px] rounded-[3px] bg-white border border-[#666] font-['Noto_Sans_CJK_SC',sans-serif] text-[12px] overflow-hidden"><span class="flex-1 whitespace-nowrap">没有选择过滤器</span><span class="w-4 h-full bg-[#a8bedc] flex items-center justify-center"><span class="border-x-[5px] border-t-[6px] border-x-transparent border-t-[#123]"></span></span></div>
	<div class="absolute left-[125px] flex items-center w-[115px] h-[17px] rounded-[3px] bg-white border border-[#666] font-['Noto_Sans_CJK_SC',sans-serif] text-[12px] overflow-hidden"><span class="flex-1 whitespace-nowrap">整个装配</span><span class="w-4 h-full bg-[#a8bedc] flex items-center justify-center"><span class="border-x-[5px] border-t-[6px] border-x-transparent border-t-[#123]"></span></span></div>`);

row('b1',`6:g 24:*a1 55:*a2 86:*a3 117:*a4 148:*a5 179:*a6 210:*a7 241:*a8 272:*a9 303:*a10 334:*a11 365:*a12 386:d 394:s 400:g 418:*c1 449:*c2 480:*c3 511:*c4 542:*c5 573:*c6 604:*c7 635:*c8 666:*c9 697:*c10 728:*c11 749:d 757:s 763:g 781:*d1 812:*d2 843:*d3 874:*d4 905:*d5 936:*d6 967:*d7 998:*d8 1029:*d9 1060:*d10 1091:*d11 1122:*d12 1153:*d13 1184:*d14 1215:*d15 1246:*d16 1267:d 1275:s`);
row('b2',`146:s 152:g 170:*e1 200:cad 230:*e3 262:*e4 293:*e5 324:*e6 355:*e7 386:*e8 417:*e9 448:*e10 478:*e11 509:*e12 540:*e13 571:*e14 602:*e15 633:*e16 655:d 663:s 669:g 687:*f1 718:*f2 749:*f3 780:*f4 811:*f5 842:f6 873:*f7 904:*f8 935:*f9 966:*f10 997:*f11 1028:*f12 1059:*f13 1090:*f14 1121:*f15 1152:*f16 1183:*f17 1214:*f18 1245:*f19 1276:*cb10 1307:*cub2 1338:*rbox 1359:d`);

// dock tabs: [top, icon]
const dock=[[198,'k1'],[240,'k2'],[282,'k3'],[324,'k4'],[378,'k5'],[432,'k6'],[486,'k7'],[528,'k8'],[570,'k9'],[612,'k10'],[654,'k11'],[696,'k12']];
let dc=197;
document.getElementById('dock').innerHTML=dock.map(([y,n])=>{
	const m=y-dc;dc=y+39;
	return `<span class="flex items-center justify-end pr-px w-[25px] h-[39px] rounded-l-[4px] bg-[#dcdcdc] border border-r-0 border-[#8a8a8a] blur-[0.2px] shrink-0" style="margin-top:${m}px">${svg(n)}</span>`;
}).join('');

// sketch toolbar, same idea but vertical
const tools=[[202,'t0'],[234,'gt'],[274,'V'],[317,'ts'],[348,'tl'],[379,'ta'],[410,'tc'],[441,'tf'],[472,'tg'],[503,'tr'],[534,'tp'],[565,'tx'],[596,'tq+'],[614,'-'],[632,'tn1'],[664,'tn2'],[695,'tn3'],[714,'-'],[732,'td+'],[751,'-'],[768,'tm1'],[800,'tm2'],[831,'tm3+'],[850,'-'],[868,'tb1'],[899,'tb2']];
let ty=186,th=`<span class="mt-[4px] w-[36px] border-t-2 border-dotted border-[#f4f4f4]"></span>`;
tools.forEach(([y,n])=>{
	if(n=='-'){th+=`<span class="shrink-0 w-[40px] h-[2px] bg-[#f0f0f0]" style="margin-top:${y-1-ty}px"></span>`;ty=y+1;return;}
	if(n=='V'){th+=`<span class="shrink-0 h-[48px] [writing-mode:vertical-rl] font-['Noto_Sans_CJK_SC',sans-serif] text-[12px] leading-none text-[#a4a4a4] flex items-center" style="margin-top:${y-24-ty}px">完成草图</span>`;ty=y+24;return;}
	const drop=n.endsWith('+');const name=drop?n.slice(0,-1):n;
	th+=`<span class="relative shrink-0 w-6 h-6" style="margin-top:${y-12-ty}px">${svg(name)}${drop?`<span class="absolute left-[24px] top-[10px] flex">${cr()}</span>`:''}</span>`;
	ty=y+12;
});
th+=`<span class="mt-[20px] w-[34px] flex justify-between text-[#222]"><svg class="w-[5px] h-[8px]" viewBox="0 0 5 8"><path d="M5 0v8L0 4z" fill="#111"/></svg><svg class="w-[7px] h-[8px]" viewBox="0 0 7 8"><path d="M0 0l3.500 3L7 0M0 4l3.500 3L7 4" fill="none" stroke="#111"/></svg></span>`;
document.getElementById('tools').innerHTML=th;
</script>
</body>
</html>
